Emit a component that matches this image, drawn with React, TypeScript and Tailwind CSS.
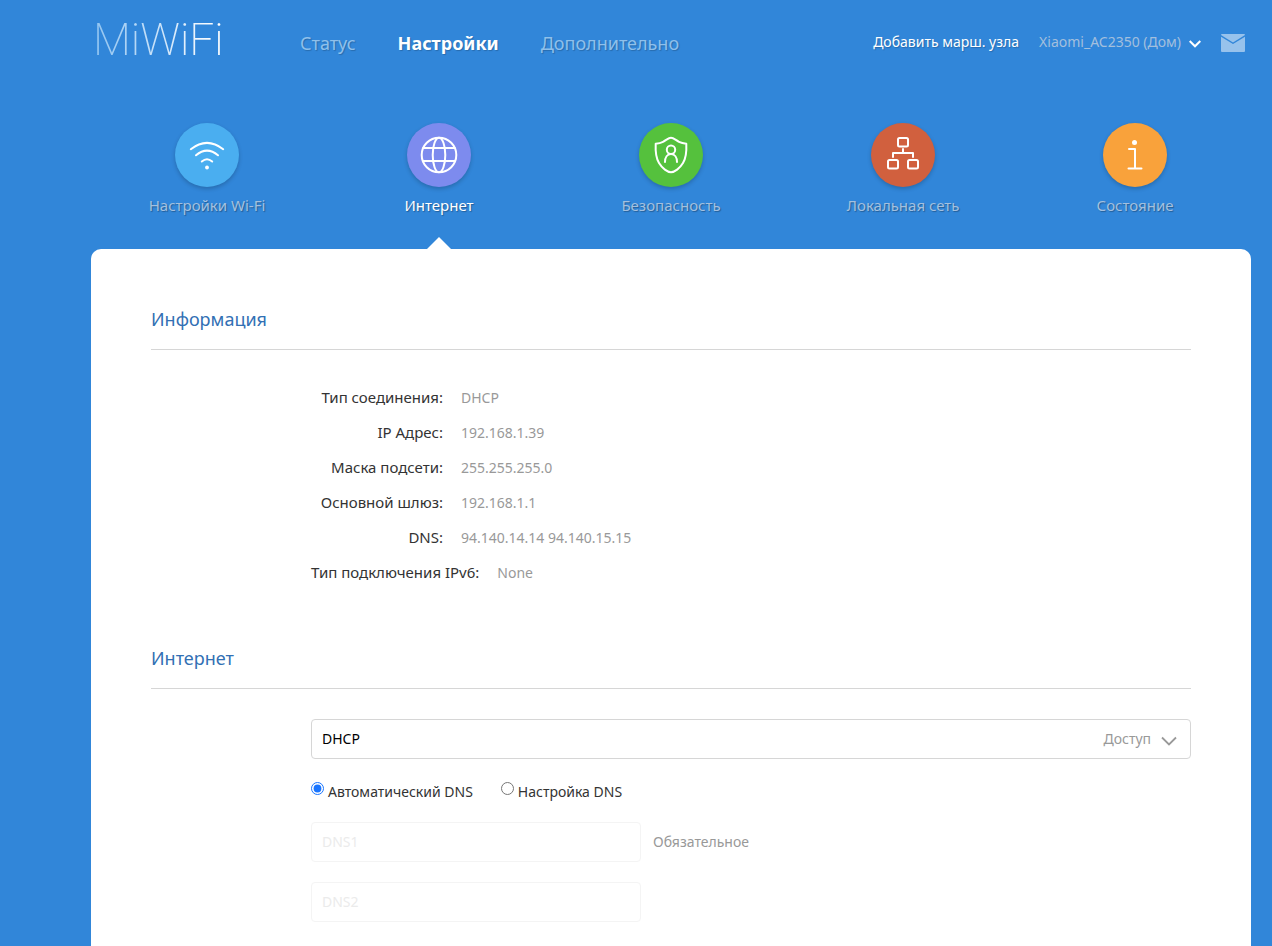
import type { ReactNode } from "react";

const tabs: { label: string; color: string; active?: boolean; icon: ReactNode }[] = [
  {
    label: "Настройки Wi-Fi",
    color: "bg-[#4aaef0]",
    icon: (
      <>
        <path d="M15.800 26.200Q32 13.500 48.200 26.200" />
        <path d="M21 32.300Q32 23 43 32.300" />
        <path d="M26.800 38.500Q32 34 37.200 38.500" />
        <circle cx="32" cy="44.500" r="1.900" fill="currentColor" stroke="none" />
      </>
    ),
  },
  {
    label: "Интернет",
    color: "bg-[#7d8bee]",
    active: true,
    icon: (
      <>
        <circle cx="32" cy="32" r="17.300" />
        <ellipse cx="32" cy="32" rx="6.300" ry="17.300" />
        <path d="M16.300 25h31.400M16.300 38h31.400" />
      </>
    ),
  },
  {
    label: "Безопасность",
    color: "bg-[#55c13d]",
    icon: (
      <>
        <path d="M32 14.800c-2.500 0-5 2.600-8 4-2.500 1.200-5.500 1.700-7.300 1.900-.4 8.300.3 14.300 3.300 19.300 3.200 5.300 8.500 9.200 12 9.200s8.800-3.900 12-9.200c3-5 3.700-11 3.300-19.300-1.800-.2-4.800-.7-7.300-1.900-3-1.400-5.500-4-8-4z" />
        <circle cx="32" cy="26.700" r="4.200" />
        <path d="M26 39c0-4.700 2.200-8 6-8s6 3.300 6 8" />
      </>
    ),
  },
  {
    label: "Локальная сеть",
    color: "bg-[#d1603e]",
    icon: (
      <>
        <rect x="27" y="15" width="10" height="8.500" rx="1.500" />
        <rect x="17" y="37" width="10" height="8.500" rx="1.500" />
        <rect x="37" y="37" width="10" height="8.500" rx="1.500" />
        <path d="M32 26v4M22 34v-4h20v4" />
      </>
    ),
  },
  {
    label: "Состояние",
    color: "bg-[#f9a23b]",
    icon: (
      <>
        <circle cx="31.500" cy="19.500" r="2.500" fill="currentColor" stroke="none" />
        <path d="M26 26h6v19.500M25.500 45.500h13" />
      </>
    ),
  },
];

const info = [
  ["Тип соединения", "DHCP"],
  ["IP Адрес", "192.168.1.39"],
  ["Маска подсети", "255.255.255.0"],
  ["Основной шлюз", "192.168.1.1"],
  ["DNS", "94.140.14.14 94.140.15.15"],
  ["Тип подключения IPv6", "None"],
];

function Header() {
  return (
    <header className="flex h-[86px] items-center justify-between pr-1.5 pl-0.5 whitespace-nowrap">
      <div className="flex items-center">
        <a
          href="#home"
          className="w-[207px] bg-linear-to-r from-[#8fc3f0] from-0% to-white to-60% bg-clip-text pb-1.5 font-['Roboto',sans-serif] text-[44px] leading-[72px] font-extralight text-transparent"
        >
          MiWiFi
        </a>
        <nav className="flex gap-[42px] text-lg text-[#8fc0eb] [text-shadow:1px_1px_1px_rgba(0,0,0,0.2)]">
          <a href="#status">Статус</a>
          <a href="#settings" className="font-bold text-white">
            Настройки
          </a>
          <a href="#advanced">Дополнительно</a>
        </nav>
      </div>
      <div className="flex items-center gap-5 text-sm [text-shadow:1px_1px_1px_rgba(0,0,0,0.2)]">
        <a href="#add" className="pb-0.5 text-white">
          Добавить марш. узла
        </a>
        <button type="button" className="flex items-center gap-2 pb-0.5 text-[#a3bfdd]">
          Xiaomi_AC2350 (Дом)
          <svg viewBox="0 0 12 8" className="mt-1 h-2 w-3 text-white" fill="none" stroke="currentColor" strokeWidth="2">
            <path d="M.7 1 6 6.300 11.300 1" />
          </svg>
        </button>
        <button type="button" aria-label="Сообщения" className="text-[#97c2ec]">
          <svg viewBox="0 0 24 18" className="h-[18px] w-6" fill="currentColor">
            <path d="M1 0h22q1 0 1 1L12 8.500 0 1Q0 0 1 0z" />
            <path d="M0 2.800 12 10l12-7.200V17q0 1-1 1H1q-1 0-1-1z" />
          </svg>
        </button>
      </div>
    </header>
  );
}

function Tabs() {
  return (
    <nav className="grid grid-cols-5 pt-[37px] text-[15px]">
      {tabs.map((t) => (
        <a
          key={t.label}
          href="#tab"
          className={`flex flex-col items-center [text-shadow:1px_1px_1px_rgba(0,0,0,0.3)] ${t.active ? "text-white" : "text-[#a3c0df]"}`}
        >
          <span className={`rounded-full text-white shadow-[0_2px_4px_rgba(0,0,0,0.2)] ${t.color}`}>
            <svg viewBox="0 0 64 64" className="size-16" fill="none" stroke="currentColor" strokeWidth="2" strokeLinecap="round" strokeLinejoin="round">
              {t.icon}
            </svg>
          </span>
          <span className="mt-2 leading-5">{t.label}</span>
          <svg viewBox="0 0 24 12" className={`mt-[22px] h-3 w-6 ${t.active ? "" : "invisible"}`} fill="white">
            <path d="M0 12 12 0l12 12z" />
          </svg>
        </a>
      ))}
    </nav>
  );
}

function SectionTitle({ children }: { children: ReactNode }) {
  return (
    <h2 className="border-b border-[#d6d6d6] pb-4 text-lg leading-7 text-[#3270b4]">{children}</h2>
  );
}

export default function App() {
  return (
    <div className="flex min-h-screen flex-col bg-[#3186d9] pr-[21px] pl-[91px] font-['Noto_Sans',sans-serif] text-[#333]">
      <Header />
      <Tabs />
      <main className="flex-1 rounded-t-[10px] bg-white px-[60px] pt-14 pb-6 text-sm">
        <section>
          <SectionTitle>Информация</SectionTitle>
          <dl className="pt-[30px] pl-40 leading-[35px]">
            {info.map(([name, value]) => (
              <div key={name} className="flex gap-[18px] whitespace-nowrap">
                <dt className="min-w-[132px] text-right text-[15px]">{name}:</dt>
                <dd className="text-[#999]">{value}</dd>
              </div>
            ))}
          </dl>
        </section>
        <section className="pt-[54px]">
          <SectionTitle>Интернет</SectionTitle>
          <form className="pt-[30px] pl-40">
            <div className="relative">
              <select
                aria-label="Доступ"
                className="h-10 w-full appearance-none rounded-[4px] border border-[#d6d6d6] bg-white px-2.5 text-black"
              >
                <option>DHCP</option>
                <option>PPPoE</option>
              </select>
              <div className="pointer-events-none absolute inset-y-0 right-3.5 flex items-center gap-2.5 text-[#999]">
                Доступ
                <svg viewBox="0 0 16 10" className="mt-1 h-2.5 w-4" fill="none" stroke="currentColor" strokeWidth="1.800">
                  <path d="M1 1.500 8 8.500l7-7" />
                </svg>
              </div>
            </div>
            <div className="flex gap-7 pt-[22px] leading-[22px]">
              <label className="flex gap-1">
                <input type="radio" name="dns" defaultChecked className="mt-px size-[13px] accent-[#1a75ff]" />
                Автоматический DNS
              </label>
              <label className="flex gap-1">
                <input type="radio" name="dns" className="mt-px size-[13px]" />
                Настройка DNS
              </label>
            </div>
            <div className="flex items-center gap-3 pt-[19px]">
              <input
                id="dns1"
                placeholder="DNS1"
                aria-label="DNS1"
                disabled
                className="h-10 w-[330px] rounded-[4px] border border-[#f4f4f4] bg-white px-2.5 pb-0.5 placeholder:text-[#ebebeb]"
              />
              <label htmlFor="dns1" className="text-[#999]">
                Обязательное
              </label>
            </div>
            <div className="pt-5">
              <input
                placeholder="DNS2"
                aria-label="DNS2"
                disabled
                className="h-10 w-[330px] rounded-[4px] border border-[#f4f4f4] bg-white px-2.5 pb-0.5 placeholder:text-[#ebebeb]"
              />
            </div>
          </form>
        </section>
      </main>
    </div>
  );
}
